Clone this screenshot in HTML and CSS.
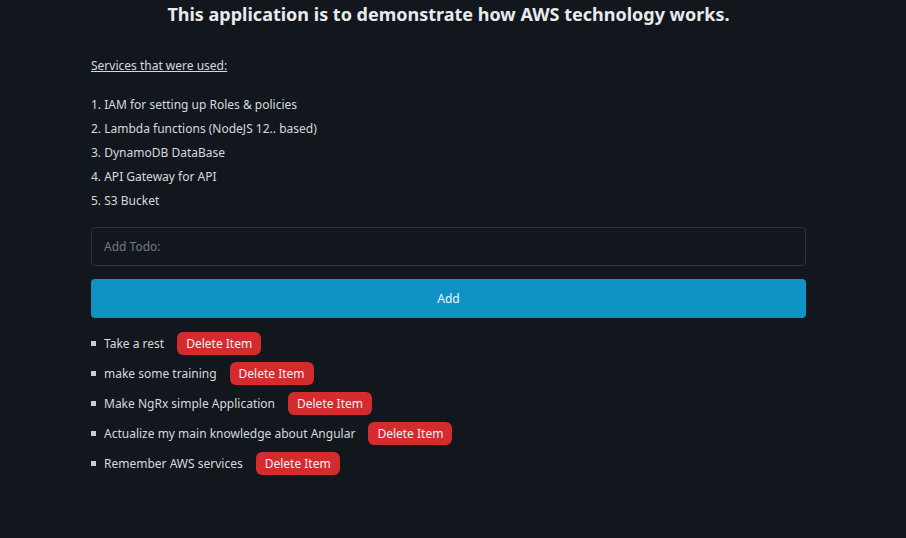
FILE: index.html
```html
<!DOCTYPE html>
<html>
<head>
<meta charset="utf-8">
<link rel="stylesheet" href="styles.css">
</head>
<body>
<div class="page">
  <h1 class="title">This application is to demonstrate how AWS technology works.</h1>
  <p class="subtitle">Services that were used:</p>
  <ol class="services">
    <li>1. IAM for setting up Roles &amp; policies</li>
    <li>2. Lambda functions (NodeJS 12.. based)</li>
    <li>3. DynamoDB DataBase</li>
    <li>4. API Gateway for API</li>
    <li>5. S3 Bucket</li>
  </ol>
  <form class="todo-form">
    <input class="todo-input" type="text" placeholder="Add Todo:">
    <button class="add-btn" type="button">Add</button>
  </form>
  <ul class="todos">
    <li class="todo"><span class="todo-text">Take a rest</span><button class="del-btn" type="button">Delete Item</button></li>
    <li class="todo"><span class="todo-text">make some training</span><button class="del-btn" type="button">Delete Item</button></li>
    <li class="todo"><span class="todo-text">Make NgRx simple Application</span><button class="del-btn" type="button">Delete Item</button></li>
    <li class="todo"><span class="todo-text">Actualize my main knowledge about Angular</span><button class="del-btn" type="button">Delete Item</button></li>
    <li class="todo"><span class="todo-text">Remember AWS services</span><button class="del-btn" type="button">Delete Item</button></li>
  </ul>
</div>
</body>
</html>
```
FILE: styles.css
```css
html, body {
  margin: 0;
  padding: 0;
  background: #12171e;
  height: 100%;
}
body {
  font-family: "Noto Sans", "Open Sans", sans-serif;
  font-size: 12px;
  color: #d5d9dd;
}
.page {
  width: 715px;
  margin-left: 91px;
}
.title {
  margin: 0;
  padding-top: 1px;
  text-align: center;
  font-size: 18px;
  font-weight: 700;
  color: #e8eaec;
  line-height: 26px;
}
.subtitle {
  margin: 30px 0 0;
  text-decoration: underline;
  line-height: 18px;
}
.services {
  list-style: none;
  margin: 18px 0 0;
  padding: 0;
}
.services li {
  line-height: 24px;
}
.todo-form {
  margin-top: 14px;
  display: flex;
  flex-direction: column;
  gap: 13px;
}
.todo-input {
  box-sizing: border-box;
  height: 39px;
  padding: 0 12px;
  background: #12171e;
  border: 1px solid #2d333a;
  border-radius: 4px;
  font-family: inherit;
  font-size: 12px;
  color: #d5d9dd;
  outline: none;
}
.todo-input::placeholder {
  color: #72787e;
}
.add-btn {
  height: 39px;
  border: none;
  border-radius: 4px;
  background: #0f93c4;
  color: #eef6fa;
  font-family: inherit;
  font-size: 12px;
}
.todos {
  margin: 10px 0 0;
  padding: 0;
  list-style: none;
}
.todo {
  display: flex;
  align-items: center;
  height: 30px;
}
.todo::before {
  content: "";
  width: 5px;
  height: 5px;
  background: #c9cdd1;
  margin-left: 0;
  margin-right: 8px;
}
.todo-text {
  margin-right: 13px;
}
.del-btn {
  height: 23px;
  padding: 0 9px;
  border: none;
  border-radius: 6px;
  background: #d32b2e;
  color: #f6f0f0;
  font-family: inherit;
  font-size: 12px;
}
```
